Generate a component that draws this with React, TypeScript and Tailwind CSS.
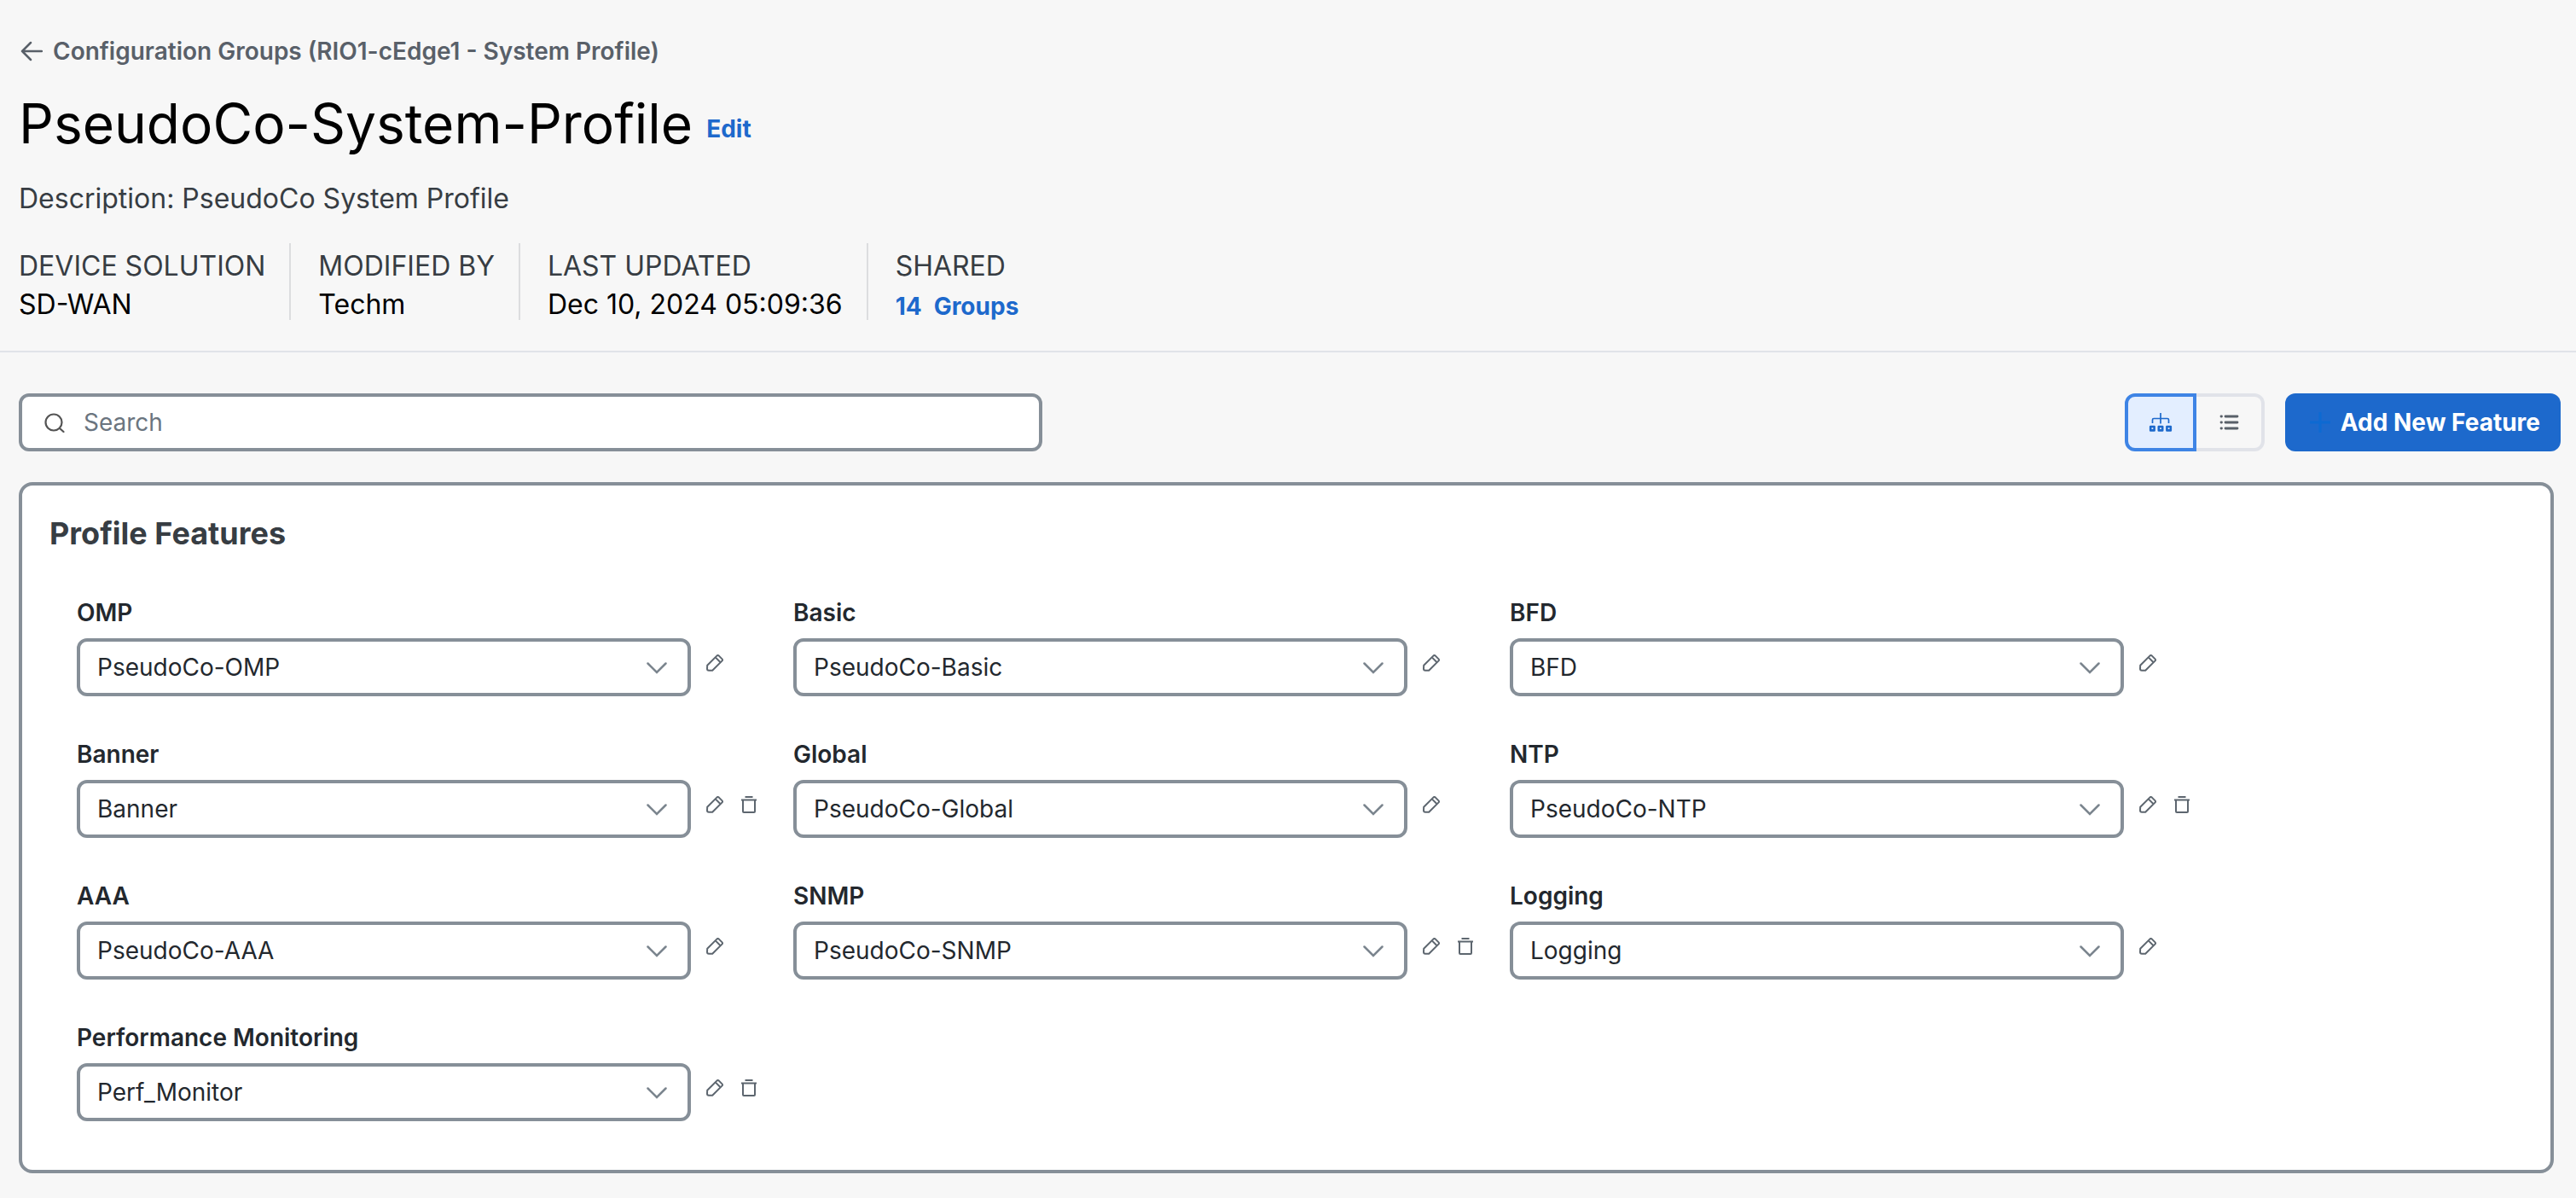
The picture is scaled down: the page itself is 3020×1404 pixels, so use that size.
import React, { useState } from 'react';
import clsx from 'clsx';

type Feature = {
  label: string;
  value: string;
  removable?: boolean;
};

const features: Feature[] = [
  { label: 'OMP', value: 'PseudoCo-OMP' },
  { label: 'Basic', value: 'PseudoCo-Basic' },
  { label: 'BFD', value: 'BFD' },
  { label: 'Banner', value: 'Banner', removable: true },
  { label: 'Global', value: 'PseudoCo-Global' },
  { label: 'NTP', value: 'PseudoCo-NTP', removable: true },
  { label: 'AAA', value: 'PseudoCo-AAA' },
  { label: 'SNMP', value: 'PseudoCo-SNMP', removable: true },
  { label: 'Logging', value: 'Logging' },
  { label: 'Performance Monitoring', value: 'Perf_Monitor', removable: true },
];

const BackIcon = () => (
  <svg className="h-6 w-7" viewBox="0 0 28 24" fill="none" stroke="currentColor" strokeWidth="2.5" strokeLinecap="round" strokeLinejoin="round" aria-hidden="true">
    <path d="M27 12H4M14 2 4 12l10 10" />
  </svg>
);

const SearchIcon = () => (
  <svg className="size-6 shrink-0 text-[#545454]" viewBox="0 0 24 24" fill="none" stroke="currentColor" strokeWidth="2.2" strokeLinecap="round" aria-hidden="true">
    <circle cx="11" cy="12" r="9.5" />
    <path d="m18 19 4.500 4" />
  </svg>
);

const TreeIcon = () => (
  <svg className="h-6 w-7" viewBox="0 0 28 24" fill="none" stroke="currentColor" strokeWidth="1.7" aria-hidden="true">
    <path d="M14 1v12.5M4.5 13V9q0-1.5 1.5-1.5h16q1.5 0 1.5 1.5v4" />
    <g strokeWidth="2.6" strokeLinejoin="round">
      <path d="M2.2 17h4.4v4.4H2.2zM11.800 17h4.400v4.400h-4.400zM21.400 17h4.400v4.400h-4.400z" />
    </g>
  </svg>
);

const ListIcon = () => (
  <svg className="h-6 w-7" viewBox="0 0 28 24" fill="none" stroke="currentColor" strokeWidth="2.8" strokeLinecap="round" aria-hidden="true">
    <path d="M10 5h14M10 12h14M10 19h14M5 5h.5M5 12h.5M5 19h.5" />
  </svg>
);

const PlusIcon = () => (
  <svg className="size-6 text-[#0d6ad2]" viewBox="0 0 24 24" fill="none" stroke="currentColor" strokeWidth="3" aria-hidden="true">
    <path d="M12 0v24M0 12h24" />
  </svg>
);

const ChevronIcon = () => (
  <svg className="pointer-events-none absolute top-7 right-7 h-4 w-6 text-[#7b858e]" viewBox="0 0 24 16" fill="none" stroke="currentColor" strokeWidth="2.5" strokeLinecap="round" aria-hidden="true">
    <path d="M1.5 1.5 12 12 22.5 1.5" />
  </svg>
);

const PencilIcon = () => (
  <svg className="size-5" viewBox="0 0 20 20" fill="none" stroke="currentColor" strokeWidth="2" strokeLinejoin="round" aria-hidden="true">
    <path d="M1.2 12.8 12.6 1.4q1-.8 2 0l4 4q.8 1 0 2L7.2 18.8H3q-2 0-2-2z" />
    <path d="m11 3.6 5.4 5.4" />
  </svg>
);

const TrashIcon = () => (
  <svg className="size-5" viewBox="0 0 20 20" fill="none" stroke="currentColor" strokeWidth="2" strokeLinejoin="round" aria-hidden="true">
    <path d="M5.5 1h9" />
    <path d="M1 4.5h18M3 4.5V18q0 1 1 1h12q1 0 1-1V4.5" />
  </svg>
);

const MetaItem = ({ label, children, last }: { label: string; children: React.ReactNode; last?: boolean }) => (
  <div className={clsx('h-[90px]', !last && 'mr-8 border-r-2 border-[#dcdddf] pr-7')}>
    <dt className="leading-[54px] text-[#373d43]">{label}</dt>
    <dd className="leading-9 text-black">{children}</dd>
  </div>
);

const FeatureField = ({ label, value, removable }: Feature) => {
  const id = `feature-${label.toLowerCase().replace(/\s+/g, '-')}`;

  return (
    <div>
      <label htmlFor={id} className="block leading-10 font-semibold">
        {label}
      </label>
      <div className="mt-2.5 flex items-center">
        <div className="relative flex-1">
          <select
            id={id}
            defaultValue={value}
            className="block h-[68px] w-full appearance-none rounded-xl border-4 border-[#868f98] bg-white pr-16 pl-5"
          >
            <option>{value}</option>
          </select>
          <ChevronIcon />
        </div>
        <div className="mb-2.5 ml-[18px] flex w-[102px] gap-5 text-[#5d666f]">
          <button type="button" aria-label={`Edit ${label}`}>
            <PencilIcon />
          </button>
          {removable && (
            <button type="button" aria-label={`Delete ${label}`}>
              <TrashIcon />
            </button>
          )}
        </div>
      </div>
    </div>
  );
};

const App = () => {
  const [view, setView] = useState<'tree' | 'list'>('tree');

  return (
    <div className="min-h-screen bg-[#f7f7f7] pb-7 font-['Inter',sans-serif] text-[28px] text-[#23282e]">
      {/* Profile header */}
      <header className="border-b-2 border-[#e1e3e9] px-[22px] pt-10 pb-9">
        <a href="#groups" className="flex items-center gap-3 leading-10 font-semibold text-[#596069]">
          <BackIcon />
          Configuration Groups (RIO1-cEdge1 - System Profile)
        </a>
        <div className="mt-[25px] flex items-end gap-4">
          <h1 className="text-[64px] leading-[80px] text-black">PseudoCo-System-Profile</h1>
          <button type="button" className="pb-3.5 leading-10 font-bold text-[#1d69cc]">
            Edit
          </button>
        </div>
        <p className="mt-7 text-[32px] leading-10 text-[#373d43]">Description: PseudoCo System Profile</p>
        <dl className="mt-8 flex text-[32px]">
          <MetaItem label="DEVICE SOLUTION">SD-WAN</MetaItem>
          <MetaItem label="MODIFIED BY">Techm</MetaItem>
          <MetaItem label="LAST UPDATED">Dec 10, 2024 05:09:36</MetaItem>
          <MetaItem label="SHARED" last>
            <a href="#shared" className="flex gap-3.5 text-[28px] leading-10 font-bold text-[#1d69cc]">
              <span>14</span>
              <span>Groups</span>
            </a>
          </MetaItem>
        </dl>
      </header>

      {/* Toolbar */}
      <div className="flex items-center justify-between pt-12 pr-[18px] pl-[22px]">
        <label className="flex h-[68px] w-full max-w-[1200px] items-center gap-[22px] rounded-xl border-4 border-[#868f98] bg-white px-[26px]">
          <SearchIcon />
          <input
            type="search"
            aria-label="Search"
            placeholder="Search"
            className="min-w-0 flex-1 outline-none placeholder:text-[#6b757f]"
          />
        </label>
        <div className="flex gap-6">
          <div className="flex">
            <button
              type="button"
              aria-label="Tree view"
              aria-pressed={view === 'tree'}
              onClick={() => setView('tree')}
              className={clsx(
                'flex h-[68px] w-[84px] items-center justify-center rounded-l-xl border-4',
                view === 'tree' ? 'border-[#3e84e5] bg-[#e3eeff] text-[#1d69cc]' : 'border-r-0 border-[#e1e3e9] text-[#596069]'
              )}
            >
              <TreeIcon />
            </button>
            <button
              type="button"
              aria-label="List view"
              aria-pressed={view === 'list'}
              onClick={() => setView('list')}
              className={clsx(
                'flex h-[68px] w-20 items-center justify-center rounded-r-xl border-4',
                view === 'list' ? 'border-[#3e84e5] bg-[#e3eeff] text-[#1d69cc]' : 'border-l-0 border-[#e1e3e9] text-[#596069]'
              )}
            >
              <ListIcon />
            </button>
          </div>
          <button type="button" className="flex h-[68px] items-center gap-3 rounded-xl bg-[#1d69cc] pr-6 pl-[29px] font-bold text-white">
            <PlusIcon />
            Add New Feature
          </button>
        </div>
      </div>

      {/* Profile features */}
      <section className="mt-9 mr-[26px] ml-[22px] rounded-2xl border-4 border-[#868f98] bg-white px-8 pt-8 pb-[57px]">
        <h2 className="text-[36px] leading-[48px] font-bold text-[#373d43]">Profile Features</h2>
        <div className="mt-[49px] mr-[348px] ml-8 grid grid-cols-3 gap-y-12">
          {features.map((feature) => (
            <FeatureField key={feature.label} {...feature} />
          ))}
        </div>
      </section>
    </div>
  );
};

export default App;
